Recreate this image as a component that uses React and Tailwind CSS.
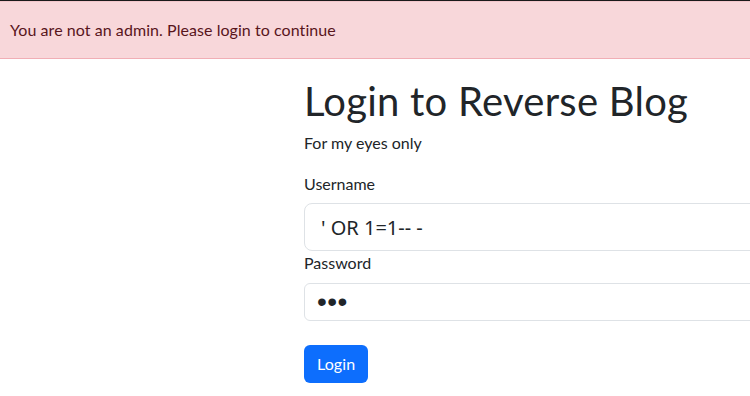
import React from 'react';

export default function App() {
  return (
    <div className="h-[396px] w-[750px] overflow-hidden bg-white text-[#212529] font-['Lato','Open_Sans',sans-serif]">
      <div className="h-px bg-[#1a1a1a]" />
      {/* Alert */}
      <div className="border-y border-[#f1aeb5] border-t-[#f3c6cb] bg-[#f8d7da] px-[10px] py-[16px] text-[16px] leading-[24px] tracking-[0.06px] text-[#58151c]">
        You are not an admin. Please login to continue
      </div>

      {/* Form */}
      <div className="pl-[304px] pt-[18px]">
        <h1 className="text-[40px] leading-[48px] font-normal tracking-[0.25px]">Login to Reverse Blog</h1>
        <p className="mt-[6px] text-[16px] leading-[24px]">For my eyes only</p>

        <form className="mt-[17px]" onSubmit={(e) => e.preventDefault()}>
          <label className="mb-[7px] block text-[16px] leading-[24px]">Username</label>
          <input
            type="text"
            defaultValue="' OR 1=1-- -"
            className="block h-[48px] w-[520px] rounded-[8px] border border-[#dee2e6] px-[16px] text-[20px] text-[#212529] outline-none font-['Noto_Sans','Open_Sans',sans-serif]"
          />
          <label className="mb-[8px] block text-[16px] leading-[24px]">Password</label>
          <input
            type="password"
            defaultValue="abc"
            className="block h-[38px] w-[520px] rounded-[6px] border border-[#dee2e6] px-[12px] text-[28px] tracking-[0.4px] text-[#212529] outline-none font-['Liberation_Sans',sans-serif]"
          />
          <button
            type="submit"
            className="mt-[24px] h-[38px] rounded-[6px] bg-[#0d6efd] px-[13px] text-[16px] tracking-[0.1px] text-white"
          >
            Login
          </button>
        </form>
      </div>
    </div>
  );
}
